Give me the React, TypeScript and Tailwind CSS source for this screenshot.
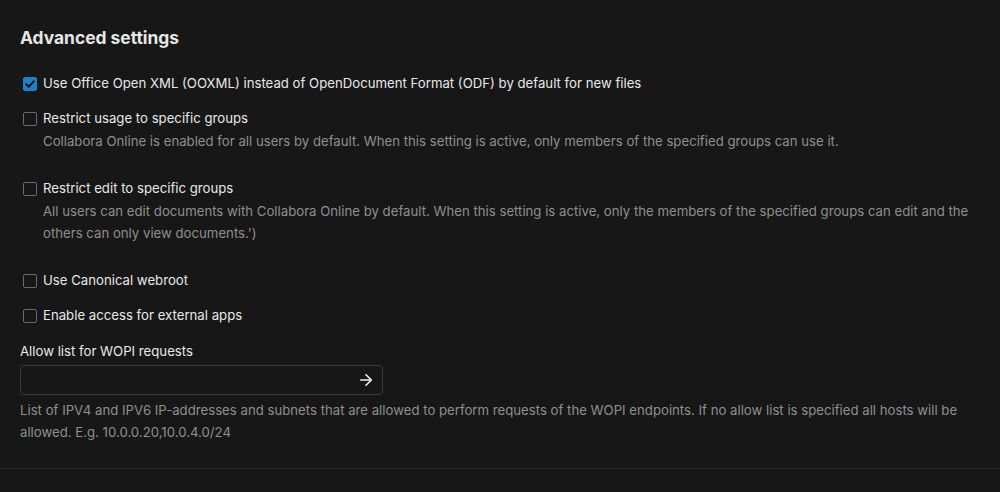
import { ArrowRight } from "lucide-react";

type Option = {
  label: string;
  checked?: boolean;
  description?: string;
};

const options: Option[] = [
  {
    label: "Use Office Open XML (OOXML) instead of OpenDocument Format (ODF) by default for new files",
    checked: true,
  },
  {
    label: "Restrict usage to specific groups",
    description:
      "Collabora Online is enabled for all users by default. When this setting is active, only members of the specified groups can use it.",
  },
  {
    label: "Restrict edit to specific groups",
    description:
      "All users can edit documents with Collabora Online by default. When this setting is active, only the members of the specified groups can edit and the others can only view documents.')",
  },
  { label: "Use Canonical webroot" },
  { label: "Enable access for external apps" },
];

function Checkbox({ checked }: { checked?: boolean }) {
  if (checked) {
    return (
      <span className="flex size-[14px] shrink-0 items-center justify-center rounded-[2px] bg-[#1b82c8]">
        <svg viewBox="0 0 14 14" className="size-[14px]" fill="none">
          <path d="M3.2 7.2 5.8 9.7 10.8 4.4" stroke="#111" strokeWidth="2" strokeLinecap="round" strokeLinejoin="round" />
        </svg>
      </span>
    );
  }
  return <span className="size-[14px] shrink-0 rounded-[2px] border border-[#6a6a6a]" />;
}

export default function App() {
  return (
    <div className="min-h-[492px] w-[1000px] bg-[#171717] font-['Inter',sans-serif] text-[#e8e8e8]">
      <section className="border-b border-[#262626] px-5 pt-[27px] pb-[25px]">
        <h2 className="text-[17.4px] font-bold leading-[22px] text-[#e6e6e6]">Advanced settings</h2>

        <div className="mt-[24px] flex flex-col">
          {options.map((o, i) => (
            <div key={i} className={o.description ? "mb-[26px]" : "mb-[13px]"}>
              <label className="flex h-[22px] items-center gap-[6px] pl-[3px] text-[13.2px]">
                <Checkbox checked={o.checked} />
                <span>{o.label}</span>
              </label>
              {o.description && (
                <p className="pl-[23px] text-[13.2px] leading-[22px] text-[#8f8f8f]">{o.description}</p>
              )}
            </div>
          ))}
        </div>

        <label className="block text-[13.2px] leading-[22px]">Allow list for WOPI requests</label>
        <div className="mt-[3px] flex h-[30px] w-[363px] items-center justify-end rounded-[4px] border border-[#3a3a3a] pr-[7px]">
          <ArrowRight className="size-[18px] text-[#f0f0f0]" strokeWidth={2.2} />
        </div>
        <p className="mt-[4px] pr-4 text-[13.2px] leading-[22px] text-[#8f8f8f]">
          List of IPV4 and IPV6 IP-addresses and subnets that are allowed to perform requests of the WOPI endpoints. If no allow list is specified all hosts will be allowed. E.g. 10.0.0.20,10.0.4.0/24
        </p>
      </section>
    </div>
  );
}
